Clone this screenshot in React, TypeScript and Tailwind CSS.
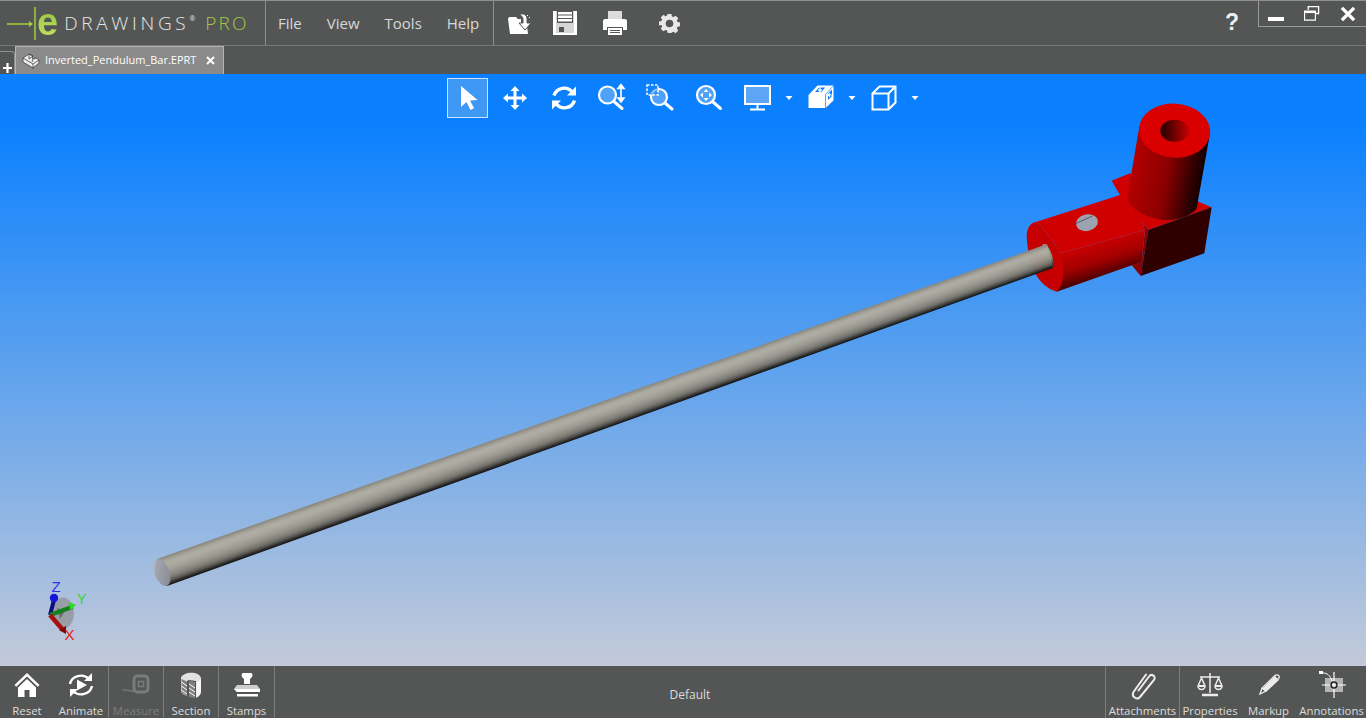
import type { ReactNode } from 'react'

const FONT = "font-['Open_Sans','Noto_Sans',sans-serif]"

// cross section of the bar, top edge to bottom edge
const ROD_SHADES = [
  '#8d8a81', '#98958c', '#a3a096', '#aba89e', '#afaca2', '#b0ada3', '#adaaa0', '#aaa79d', '#a6a399', '#a19e94',
  '#9c998f', '#96938a', '#8f8c83', '#87847c', '#7d7b73', '#716f68', '#615f59', '#4a4945', '#2f2e2c', '#1a1a1a',
]

const ROD_TOP = { a: [157, 559], b: [1047, 244] }
const ROD_BOTTOM = { a: [167, 586], b: [1053, 268] }

function rodStrip(i: number) {
  const n = ROD_SHADES.length
  const at = (t: number, k: 'a' | 'b') =>
    `${ROD_TOP[k][0] + (ROD_BOTTOM[k][0] - ROD_TOP[k][0]) * t},${ROD_TOP[k][1] + (ROD_BOTTOM[k][1] - ROD_TOP[k][1]) * t}`
  const t0 = i / n
  const t1 = Math.min(1, (i + 1.4) / n)
  return `${at(t0, 'a')} ${at(t0, 'b')} ${at(t1, 'b')} ${at(t1, 'a')}`
}

function Dropdown() {
  return (
    <svg className="w-[10px] shrink-0" width="10" height="40" viewBox="0 0 10 40">
      <path d="M1.500 18h7L5 22z" fill="#fff" />
    </svg>
  )
}

function ToolIcon({ w, children }: { w: string; children: ReactNode }) {
  return <div className={`${w} flex h-10 shrink-0 items-center justify-center`}>{children}</div>
}

function ViewToolbar() {
  return (
    <div className="ml-[447px] flex items-center pt-1">
      <div className="flex h-10 w-[41px] shrink-0 items-center justify-center border border-[#cfe4fb] bg-[#4098f5]">
        <svg width="24" height="30" viewBox="0 0 24 30">
          <path d="M5 3v21l5.500-5 4 8 3.600-1.700-4-7.800 7.400-.5z" fill="#fff" />
        </svg>
      </div>
      <ToolIcon w="w-[54px]">
        <svg width="28" height="28" viewBox="0 0 28 28" fill="#fff">
          <path d="M14 2l4.500 5h-3v5.500h5.500v-3l5 4.500-5 4.500v-3h-5.500v5.500h3l-4.500 5-4.500-5h3v-5.500h-5.500v3l-5-4.500 5-4.500v3h5.500v-5.500h-3z" />
        </svg>
      </ToolIcon>
      <ToolIcon w="w-[43px]">
        <svg width="30" height="30" viewBox="0 0 30 30" fill="none" stroke="#fff" strokeWidth="3.400">
          <path d="M5 12.500a10.500 10.500 0 0 1 18.500-3" />
          <path d="M25.500 17.500a10.500 10.500 0 0 1-18.500 3" />
          <path d="M27 3.500v9h-9z" fill="#fff" stroke="none" />
          <path d="M3 26.500v-9h9z" fill="#fff" stroke="none" />
        </svg>
      </ToolIcon>
      <ToolIcon w="w-[52px]">
        <svg width="32" height="32" viewBox="0 0 32 32" fill="none">
          <circle cx="12.500" cy="13" r="8.500" fill="#7db8f5" fillOpacity="0.6" stroke="#fff" strokeWidth="2.200" />
          <path d="M19 19.500l8 7" stroke="#fff" strokeWidth="3" strokeLinecap="round" />
          <path d="M26 4v15M26 2.500l-3 4h6zM26 20l-3-4h6z" stroke="#fff" strokeWidth="1.600" fill="#fff" />
        </svg>
      </ToolIcon>
      <ToolIcon w="w-[44px]">
        <svg width="32" height="32" viewBox="0 0 32 32" fill="none">
          <circle cx="16" cy="15" r="8" fill="#7db8f5" fillOpacity="0.6" stroke="#fff" strokeWidth="2.200" />
          <path d="M22 21l7 6" stroke="#fff" strokeWidth="3" strokeLinecap="round" />
          <rect x="4" y="3" width="11" height="10" fill="#1a84f5" fillOpacity="0.5" stroke="#fff" strokeWidth="1.500" strokeDasharray="2.500 1.500" />
        </svg>
      </ToolIcon>
      <ToolIcon w="w-[55px]">
        <svg width="32" height="32" viewBox="0 0 32 32" fill="none">
          <circle cx="13" cy="13" r="9" fill="#7db8f5" fillOpacity="0.6" stroke="#fff" strokeWidth="2.200" />
          <path d="M20 20l7.500 6.500" stroke="#fff" strokeWidth="3" strokeLinecap="round" />
          <path d="M13 7l2.500 3h-5zM13 19l-2.500-3h5zM7 13l3-2.500v5zM19 13l-3 2.500v-5z" fill="#fff" />
        </svg>
      </ToolIcon>
      <ToolIcon w="w-[48px]">
        <svg className="mr-[4px]" width="30" height="28" viewBox="0 0 30 28" fill="none">
          <rect x="2" y="2" width="25" height="18" fill="#5ea6f5" stroke="#fff" strokeWidth="2" />
          <path d="M14.500 20v5M7 25.500h15" stroke="#fff" strokeWidth="2" />
        </svg>
      </ToolIcon>
      <Dropdown />
      <ToolIcon w="w-[53px]">
        <svg width="28" height="28" viewBox="0 0 28 28">
          <path d="M1.500 11l9-9.500h16v15l-8 7.500h-17z" fill="#fff" />
          <path d="M12 3.500h6l-3.500 4.500H8zM21 9.500l4-4v6.500l-4 4z" fill="#0a80ff" />
          <path d="M18.500 24V10.500M18.500 10.500l8-9" fill="none" stroke="#0a80ff" strokeWidth="0.700" />
          <path d="M13 2.500v4.500M11.300 5.500l1.700 2 1.700-2M25 11h-3.500M23 9.300l-2 1.700 2 1.700" fill="none" stroke="#fff" strokeWidth="1.200" />
        </svg>
      </ToolIcon>
      <Dropdown />
      <ToolIcon w="w-[53px]">
        <svg width="28" height="28" viewBox="0 0 28 28" fill="none" stroke="#fff" strokeWidth="2">
          <path d="M2.500 9.500l7-7h16v16l-7 7h-16zM2.500 9.500h16v16M18.500 9.500l7-7" />
        </svg>
      </ToolIcon>
      <Dropdown />
    </div>
  )
}

function Model() {
  return (
    <svg className="absolute inset-0" width="1366" height="592" viewBox="0 74 1366 592" fill="none">
      <defs>
        <linearGradient id="rodEnd" x1="0" y1="0" x2="1" y2="1">
          <stop offset="0" stopColor="#d8dade" />
          <stop offset="0.25" stopColor="#a2a5ad" />
          <stop offset="1" stopColor="#83868e" />
        </linearGradient>
        <linearGradient id="rodTip" x1="0" y1="0" x2="0" y2="1">
          <stop offset="0" stopColor="#a3a096" />
          <stop offset="0.6" stopColor="#8f8c83" />
          <stop offset="1" stopColor="#1c1c1b" />
        </linearGradient>
        <linearGradient id="upright" gradientUnits="userSpaceOnUse" x1="360" y1="200" x2="590" y2="240">
          <stop offset="0" stopColor="#b80000" />
          <stop offset="0.5" stopColor="#8c0000" />
          <stop offset="0.85" stopColor="#2c0000" />
          <stop offset="1" stopColor="#0c0000" />
        </linearGradient>
        <linearGradient id="hole" x1="0" y1="0" x2="1" y2="0">
          <stop offset="0" stopColor="#200000" />
          <stop offset="1" stopColor="#c40000" />
        </linearGradient>
        <linearGradient id="clampLow" gradientUnits="userSpaceOnUse" x1="255" y1="450" x2="290" y2="565">
          <stop offset="0" stopColor="#d00000" />
          <stop offset="0.55" stopColor="#a00000" />
          <stop offset="1" stopColor="#3e0000" />
        </linearGradient>
      </defs>

      {/* clamp + block, traced in 3x crop coords */}
      <g transform="translate(1010 90) scale(0.33333)">
        <path d="M330 315l85 105-23 138-27-33 30-10 10-95c-10-35-35-75-75-105z" fill="#8a0000" />
        <path d="M305 272l55-22 245 102-190 68-85-105z" fill="#d00000" />
        <path d="M415 420l190-68-22 138-191 68z" fill="#2e0000" />

        <path d="M150 490L405 420l-10 95-255 90z" fill="url(#clampLow)" />
        <path d="M80 395L330 315c40 30 65 70 75 105L150 490c-20-40-45-70-70-95z" fill="#d00000" />
        <path d="M80 395c-20 3-30 20-30 45 2 50 20 105 35 125 15 20 35 35 55 40 15-15 20-35 20-65 0-25-5-35-10-50-20-40-45-70-70-95z" fill="#c60000" />

        <path d="M388 110L352 320c0 35 65 70 118 70 45 0 75-15 90-35l40-225z" fill="url(#upright)" />
        <ellipse cx="494" cy="122" rx="107" ry="81" transform="rotate(4 494 122)" fill="#da0000" />
        <ellipse cx="494" cy="122" rx="43" ry="33" fill="url(#hole)" />

        <ellipse cx="231" cy="398" rx="33" ry="25" transform="rotate(-12 231 398)" fill="#9ca2af" />
        <path d="M198 400l50-22" stroke="#34373f" strokeWidth="2" />
      </g>

      {/* bar */}
      <ellipse cx="1047.500" cy="256" rx="4.500" ry="12.500" transform="rotate(-18 1047.500 256)" fill="url(#rodTip)" />
      {ROD_SHADES.map((shade, i) => (
        <polygon key={shade + i} points={rodStrip(i)} fill={shade} />
      ))}
      <ellipse cx="162" cy="572.500" rx="7.500" ry="14" transform="rotate(-20 162 572.500)" fill="url(#rodEnd)" />

      {/* triad */}
      <ellipse cx="63" cy="613" rx="11" ry="15.500" fill="#8f8f8f" fillOpacity="0.7" />
      <path d="M57 608l6 2 1 3-4 6z" fill="#6b6f75" />
      <path d="M50 615l4-15" stroke="#0c0f7e" strokeWidth="4" />
      <circle cx="54" cy="598" r="4.200" fill="#1414d8" />
      <path d="M50 615l22-8" stroke="#15801d" strokeWidth="4.500" />
      <path d="M69 602l7 3-6 5z" fill="#24e024" />
      <path d="M50 615l13 15" stroke="#a81010" strokeWidth="4.500" />
      <path d="M59 630l7-4 0 8z" fill="#7c0808" />
      <text x="51.500" y="592" fill="#2a2ff0" fontSize="15" fontWeight="300" fontFamily="Liberation Sans, sans-serif">Z</text>
      <text x="77" y="603.500" fill="#28dc28" fontSize="14" fontFamily="Liberation Sans, sans-serif">Y</text>
      <text x="64.500" y="640" fill="#e82020" fontSize="15" fontFamily="Liberation Sans, sans-serif">X</text>
    </svg>
  )
}

function BottomItem({ label, w, dim, children }: { label: string; w: string; dim?: boolean; children: ReactNode }) {
  return (
    <div className={`${w} flex h-full shrink-0 flex-col items-center`}>
      <div className="flex h-[38px] items-center justify-center">{children}</div>
      <span className={`whitespace-nowrap text-[11.400px] leading-[14px] ${dim ? 'text-[#7c7e7d]' : 'text-[#dcdcdc]'}`}>{label}</span>
    </div>
  )
}

function Sep() {
  return <div className="h-full w-px shrink-0 bg-[#7c7e7d]" />
}

export default function App() {
  return (
    <div className={`${FONT} flex h-[718px] w-[1366px] flex-col overflow-hidden bg-[#545655]`}>
      {/* title bar */}
      <div className="flex h-[46px] shrink-0 items-stretch border-t border-b border-t-[#8f8f8f] border-b-[#777977]">
        <div className="flex w-[266px] shrink-0 items-center border-r border-[#8f8f8f]">
          <svg className="ml-[7px] shrink-0" width="30" height="34" viewBox="0 0 30 34" fill="none">
            <path d="M0 18h24" stroke="#a5d13c" strokeWidth="1.500" />
            <path d="M22 15l4 3-4 3z" fill="#a5d13c" />
            <path d="M28 1v33" stroke="#a5d13c" strokeWidth="1.500" />
          </svg>
          <span className="self-start bg-gradient-to-b from-[#8cc22c] to-[#c8e26a] bg-clip-text font-['Liberation_Sans',sans-serif] text-[38px] font-bold leading-[42px] text-transparent">e</span>
          <span className="ml-[6px] text-[19px] font-light tracking-[3.700px] text-[#e6e6e6]">DRAWINGS</span>
          <span className="mb-2 text-[7px] text-[#e6e6e6]">®</span>
          <span className="ml-[10px] text-[19px] font-light tracking-[2.200px] text-[#a6c844]">PRO</span>
        </div>
        <div className="flex w-[228px] shrink-0 items-center gap-[25px] border-r border-[#8f8f8f] pl-3 text-[15px] text-[#d8d8d8]">
          <span>File</span>
          <span>View</span>
          <span>Tools</span>
          <span>Help</span>
        </div>
        <div className="flex items-center">
          <div className="ml-[12px] flex h-8 w-[28px] items-center justify-center">
            <svg width="26" height="24" viewBox="0 0 26 24" fill="#fff">
              <path d="M1 8l1-2h7l2 2h3v7h6l1 8H3z" />
              <path d="M12 3h5c2 1 3 3 3 5v4h4l-6 7-6-7h4V8c0-2-2-4-4-5z" stroke="#545655" strokeWidth="1" />
              <path d="M20 4h1v1h-1zM22 6h1v1h-1z" />
            </svg>
          </div>
          <div className="ml-[18px] flex h-8 w-[26px] items-center justify-center">
            <svg width="26" height="26" viewBox="0 0 26 26">
              <path d="M1 1h24v24H1z" fill="#d6d6d6" />
              <path d="M1 1h3v24H1zM22 1h3v24h-3zM1 23h24v2H1z" fill="#fff" />
              <path d="M5 1h16v12H5z" fill="#545655" />
              <path d="M6 2h14v2.500H6zM6 5.500h14V8H6zM6 9h14v2.500H6z" fill="#fff" />
              <path d="M7 17h5v5H7z" fill="#545655" />
            </svg>
          </div>
          <div className="ml-[24px] flex h-8 w-[26px] items-center justify-center">
            <svg width="26" height="26" viewBox="0 0 26 26" fill="#fff">
              <path d="M6 1h14v8H6z" fill="#dcdcdc" />
              <path d="M1 11c0-1 1-2 2-2h20c1 0 2 1 2 2v9h-4v-3H5v3H1z" />
              <path d="M6 18h14v7H6z" />
              <path d="M8 20h10v1H8zM8 22h10v1H8z" fill="#545655" />
            </svg>
          </div>
          <div className="ml-[30px] flex h-8 w-[22px] items-center justify-center">
            <svg width="21" height="21" viewBox="0 0 22 22" fill="#e8e8e8">
              <path fillRule="evenodd" d="M9 1h4l.500 2.600 1.700.7 2.200-1.500 2.800 2.800-1.500 2.200.7 1.700 2.600.5v4l-2.600.5-.7 1.700 1.500 2.200-2.800 2.800-2.200-1.500-1.700.7L13 21H9l-.5-2.600-1.700-.7-2.200 1.500-2.800-2.800 1.500-2.200-.7-1.700L0 13V9l2.600-.5.7-1.700-1.500-2.200 2.800-2.800 2.200 1.500 1.700-.7zM11 7a4 4 0 1 0 0 8 4 4 0 0 0 0-8z" />
            </svg>
          </div>
        </div>
        <div className="flex flex-1 justify-end">
          <div className="mr-[19px] mt-[9px] font-['Liberation_Sans',sans-serif] text-[23px] font-bold leading-[24px] text-[#eeeeee]">?</div>
          <div className="flex h-[26px] w-[108px] items-center border-b border-l border-[#9a9a9a]">
            <div className="ml-[9px] h-1 w-4 translate-y-[5px] bg-white" />
            <svg className="ml-[20px]" width="16" height="16" viewBox="0 0 17 17" fill="none" stroke="#fff" strokeWidth="1.200">
              <path d="M4.500 4V.6h11V8H12" strokeWidth="1.400" />
              <path d="M.6 5.500h11.500v9.500H.6z" />
              <path d="M.6 6.500h11.500" strokeWidth="2" />
            </svg>
            <svg className="ml-[20px]" width="16" height="16" viewBox="0 0 17 17" stroke="#fff" strokeWidth="3.600">
              <path d="M2 2l13 13M15 2L2 15" />
            </svg>
          </div>
        </div>
      </div>

      {/* tab strip */}
      <div className="flex h-[28px] shrink-0 items-end">
        <div className="flex h-[23px] w-[15px] shrink-0 items-end justify-center rounded-tr-sm border-t border-r border-[#8f8f8f]">
          <svg width="11" height="14" viewBox="0 0 11 14">
            <path d="M5.500 3v10M1 8h9" stroke="#fff" strokeWidth="2.200" />
          </svg>
        </div>
        <div className="flex h-[28px] w-[209px] shrink-0 items-center border-x border-t border-[#b4b4b4] bg-[#8a8a8a] pl-[6px] text-[11px] text-white">
          <svg className="shrink-0" width="18" height="18" viewBox="0 0 18 18" fill="#ececec" stroke="#444" strokeWidth="0.800">
            <path d="M1 6l6-4 4 2-1 2 2 1 2-1 3 2v3l-6 5-10-6z" />
            <path d="M1 6l10 6 6-4M11 12v5M7 2l4 2-4 3zM11 7l-1 3" fill="none" />
          </svg>
          <span className="ml-[5px] whitespace-nowrap">Inverted_Pendulum_Bar.EPRT</span>
          <svg className="ml-auto mr-[8px]" width="9" height="9" viewBox="0 0 9 9" stroke="#fff" strokeWidth="2">
            <path d="M1 1l7 7M8 1L1 8" />
          </svg>
        </div>
      </div>

      {/* 3d viewport */}
      <div className="relative h-[592px] shrink-0 bg-[linear-gradient(to_bottom,#0a80ff_8%,#c3cad9_100%)]">
        <Model />
        <div className="relative">
          <ViewToolbar />
        </div>
      </div>

      {/* bottom bar */}
      <div className="flex h-[52px] shrink-0 items-stretch">
        <BottomItem label="Reset" w="w-[54px]">
          <svg width="28" height="28" viewBox="0 0 28 28" fill="#fff">
            <path d="M14 2L1.500 14l1.700 1.700L14 5.500l10.800 10.200 1.700-1.700z" />
            <path d="M14 8L5 16.500V26h6.500v-7h5v7H23v-9.500z" />
          </svg>
        </BottomItem>
        <BottomItem label="Animate" w="w-[54px]">
          <svg width="28" height="28" viewBox="0 0 28 28" fill="none" stroke="#fff" strokeWidth="2.400">
            <path d="M3 13a11 10 0 0 1 19-5" />
            <path d="M25 15a11 10 0 0 1-19 5" />
            <path d="M25 2v8h-8zM3 26v-8h8z" fill="#fff" stroke="none" />
            <path d="M10 8.500l10 5.500-10 5.500z" fill="#fff" stroke="none" />
          </svg>
        </BottomItem>
        <Sep />
        <BottomItem label="Measure" w="w-[54px]" dim>
          <svg width="28" height="24" viewBox="0 0 28 24" fill="none" stroke="#7a7c7b">
            <rect x="12" y="3" width="14" height="16" rx="3.500" strokeWidth="3" />
            <rect x="16.500" y="8.500" width="5" height="5" strokeWidth="1.600" />
            <path d="M1 16c2 3 4 0 6 1.500s4 .5 5 .5" strokeWidth="2" strokeDasharray="2 1" />
          </svg>
        </BottomItem>
        <Sep />
        <BottomItem label="Section" w="w-[54px]">
          <svg width="22" height="28" viewBox="0 0 22 28">
            <path d="M1 7C2 1 19-1 21 7v13c0 4-3 6-5 7V10L9 9 7 10v15l-4-2c-1-1-2-2-2-3z" fill="#e2e2e2" />
            <path d="M1.500 8L7 10.500V25l-5.500-4zM9 10l6 1v16l-6-1z" fill="#7f7f7f" />
            <path d="M1.500 11L7 15M1.500 15L7 19M1.500 19L7 23M9 13l6 4M9 17l6 4M9 21l6 4" stroke="#fff" strokeWidth="1" />
            <path d="M16.500 11c2 0 3.500-1.500 4.500-3v12c0 3-2 5-4.500 6z" fill="#f6f6f6" />
          </svg>
        </BottomItem>
        <Sep />
        <BottomItem label="Stamps" w="w-[55px]">
          <svg width="28" height="26" viewBox="0 0 28 26" fill="#fff">
            <path d="M10 1h8c1 0 2 2 1 4l-2 2v5h-6V7L9 5c-1-2 0-4 1-4z" />
            <path d="M4 13h20l3 4v3L4 20l-3-3z" fill="#cfcfcf" />
            <path d="M1 17l3 3h23v-3z" fill="#fff" />
            <path d="M4 22h21v2.500H4z" />
          </svg>
        </BottomItem>
        <Sep />
        <div className="flex flex-1 items-center justify-center pt-[5px] text-xs text-[#dcdcdc]">Default</div>
        <Sep />
        <BottomItem label="Attachments" w="w-[73px]">
          <svg width="30" height="30" viewBox="0 0 30 30" fill="none" stroke="#ececec" strokeWidth="2" strokeLinecap="round">
            <path d="M10.500 20.500L21 6.500c2.500-3.500 7.500 0 5 3.500L12 27c-3 3.500-9-.5-6.500-5L18 4.500" />
          </svg>
        </BottomItem>
        <Sep />
        <BottomItem label="Properties" w="w-[60px]">
          <svg width="26" height="26" viewBox="0 0 26 26" fill="none" stroke="#ececec" strokeWidth="1.500">
            <path d="M13 1v20M3 5h20" />
            <path d="M1 14l3.500-8L8 14a3.500 3.500 0 0 1-7 0zM18 14l3.500-8L25 14a3.500 3.500 0 0 1-7 0z" />
            <path d="M1 14h7M18 14h7" strokeWidth="2" />
            <path d="M5 23h16" strokeWidth="2.500" />
          </svg>
        </BottomItem>
        <BottomItem label="Markup" w="w-[57px]">
          <svg width="24" height="24" viewBox="0 0 24 24" fill="none" stroke="#ececec" strokeWidth="1.300">
            <path d="M3 21l2-6L18 2.500c1-1 3-.5 3.500 0s1 2 .2 3L9 18z" />
            <path d="M5 15l4 3M16 4.500l4 3.500" />
            <path d="M6 16L18 4l3 3L9 18z" fill="#ececec" />
          </svg>
        </BottomItem>
        <BottomItem label="Annotations" w="w-[69px]">
          <svg width="30" height="30" viewBox="0 0 30 30" fill="none" stroke="#fff">
            <rect x="8" y="8" width="18" height="14" fill="#b4b4b4" stroke="none" />
            <path d="M17 2v26M5 15h24" strokeWidth="1.200" />
            <circle cx="17" cy="15" r="3" strokeWidth="1.400" stroke="#222" />
            <path d="M6 3c4 0 7 2 9 8" strokeWidth="1" />
            <rect x="2" y="1" width="4" height="3" fill="#fff" stroke="none" />
          </svg>
        </BottomItem>
      </div>
    </div>
  )
}
